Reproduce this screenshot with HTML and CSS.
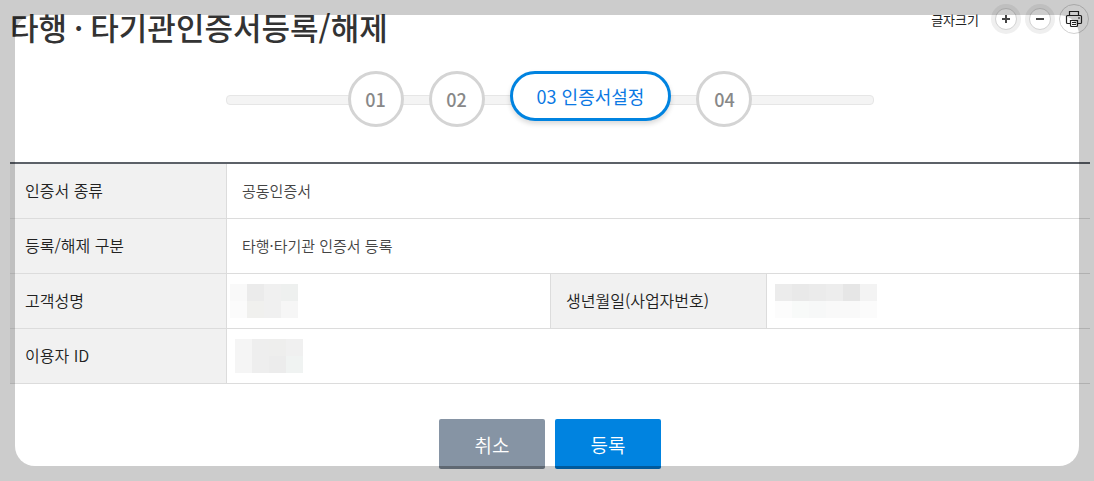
FILE: index.html
```html
<!DOCTYPE html>
<html lang="ko">
<head>
    <meta charset="UTF-8">
    <meta name="viewport" content="width=device-width, initial-scale=1.0">
    <title>타행·타기관인증서등록/해제</title>
    <link rel="stylesheet" href="styles.css">
</head>
<body>
    <header class="page-header">
        <h1>타행<span class="dot">·</span>타기관인증서등록/해제</h1>
        <div class="page-tools">
            <span class="tools-label">글자크기</span>
            <button type="button" class="tool-button" aria-label="글자 크게">
                <svg width="30" height="30" viewBox="0 0 30 30">
                    <circle cx="15" cy="15" r="15" fill="#efefef"/>
                    <circle cx="15" cy="15" r="10.5" fill="#fff" stroke="#d2d2d2"/>
                    <path d="M11 15h8M15 11v8" stroke="#444" stroke-width="2"/>
                </svg>
            </button>
            <button type="button" class="tool-button" aria-label="글자 작게">
                <svg width="30" height="30" viewBox="0 0 30 30">
                    <circle cx="15" cy="15" r="15" fill="#efefef"/>
                    <circle cx="15" cy="15" r="10.5" fill="#fff" stroke="#d2d2d2"/>
                    <path d="M11 15h8" stroke="#444" stroke-width="2"/>
                </svg>
            </button>
            <button type="button" class="tool-button" aria-label="인쇄">
                <svg width="30" height="30" viewBox="0 0 30 30">
                    <circle cx="15" cy="15" r="14.5" fill="#fff" stroke="#d2d2d2"/>
                    <g fill="none" stroke="#222" stroke-width="1.2">
                        <path d="M10.5 11.5v-4h9v4"/>
                        <path d="M11 19.5H8.5a1 1 0 0 1-1-1v-6a1 1 0 0 1 1-1h13a1 1 0 0 1 1 1v6a1 1 0 0 1-1 1H19"/>
                        <path d="M11.5 16.5h7v5a1 1 0 0 1-1 1h-5a1 1 0 0 1-1-1z"/>
                        <path d="M13 18.5h4M13 20.5h4" stroke-width="1"/>
                        <path d="M19 14h2" stroke-width="1"/>
                    </g>
                </svg>
            </button>
        </div>
    </header>

    <ol class="steps">
        <li class="step">01</li>
        <li class="step">02</li>
        <li class="step current" aria-current="step">03 인증서설정</li>
        <li class="step">04</li>
    </ol>

    <table class="info-table">
        <colgroup>
            <col class="col-label">
            <col class="col-value">
            <col class="col-label">
            <col class="col-value">
        </colgroup>
        <tr>
            <th scope="row">인증서 종류</th>
            <td colspan="3">공동인증서</td>
        </tr>
        <tr>
            <th scope="row">등록/해제 구분</th>
            <td colspan="3">타행·타기관 인증서 등록</td>
        </tr>
        <tr>
            <th scope="row">고객성명</th>
            <td class="masked name">
                <svg width="68" height="34" viewBox="0 0 4 2" shape-rendering="crispEdges">
                    <rect width="1" height="1" fill="#f9f9f9"/>
                    <rect x="1" width="1" height="1" fill="#ebebeb"/>
                    <rect x="2" width="1" height="1" fill="#f0f0f0"/>
                    <rect x="3" width="1" height="1" fill="#eef0ef"/>
                    <rect y="1" width="1" height="1" fill="#fbfbfb"/>
                    <rect x="1" y="1" width="1" height="1" fill="#f0f0ee"/>
                    <rect x="2" y="1" width="1" height="1" fill="#f0f0f0"/>
                    <rect x="3" y="1" width="1" height="1" fill="#f6f6f6"/>
                </svg>
            </td>
            <th scope="row">생년월일(사업자번호)</th>
            <td class="masked">
                <svg width="102" height="34" viewBox="0 0 6 2" shape-rendering="crispEdges">
                    <rect width="1" height="1" fill="#ececec"/>
                    <rect x="1" width="1" height="1" fill="#e9e9e9"/>
                    <rect x="2" width="1" height="1" fill="#ebebeb"/>
                    <rect x="3" width="1" height="1" fill="#ededed"/>
                    <rect x="4" width="1" height="1" fill="#e6e6e6"/>
                    <rect x="5" width="1" height="1" fill="#f3f3f3"/>
                    <rect y="1" width="1" height="1" fill="#fcfcfc"/>
                    <rect x="1" y="1" width="1" height="1" fill="#f8faf9"/>
                    <rect x="2" y="1" width="1" height="1" fill="#f7f8f8"/>
                    <rect x="3" y="1" width="2" height="1" fill="#f9f9f9"/>
                    <rect x="5" y="1" width="1" height="1" fill="#fbfbfb"/>
                </svg>
            </td>
        </tr>
        <tr>
            <th scope="row">이용자 ID</th>
            <td colspan="3" class="masked">
                <svg width="68" height="34" viewBox="0 0 4 2" shape-rendering="crispEdges">
                    <rect width="1" height="2" fill="#f5f5f5"/>
                    <rect x="1" width="1" height="2" fill="#eeeeee"/>
                    <rect x="2" width="1" height="1" fill="#eeeeed"/>
                    <rect x="3" width="1" height="1" fill="#f0f0f0"/>
                    <rect x="2" y="1" width="1" height="1" fill="#ececec"/>
                    <rect x="3" y="1" width="1" height="1" fill="#f0f3f2"/>
                </svg>
            </td>
        </tr>
    </table>

    <div class="actions">
        <button type="button" class="btn btn-cancel">취소</button>
        <button type="submit" class="btn btn-submit">등록</button>
    </div>

    <!-- 바깥 영역을 어둡게 처리 -->
    <div class="frame"></div>
</body>
</html>
```

FILE: styles.css
```css
* {
    box-sizing: border-box;
}

body {
    margin: 0;
    padding: 4px 4px 12px 10px;
    background-color: #fff;
    color: #333;
    font-family: "Noto Sans CJK KR", sans-serif;
    font-weight: 350;
}

.page-header {
    display: flex;
    justify-content: space-between;
    align-items: flex-start;
}

h1 {
    margin: 0;
    font-size: 31px;
    font-weight: 500;
    line-height: 46px;
}

h1 .dot {
    margin: 0 7px;
}

.page-tools {
    display: flex;
    align-items: center;
    gap: 4px;
    padding-right: 1px;
}

.tools-label {
    margin-right: 8px;
    color: #222;
    font-size: 13px;
    font-weight: 400;
}

.tool-button {
    padding: 0;
    border: none;
    background: none;
    cursor: pointer;
}

.tool-button svg {
    display: block;
}

/* 진행 단계 */
.steps {
    position: relative;
    display: flex;
    justify-content: center;
    align-items: flex-start;
    gap: 25px;
    width: 60%;
    margin: 21px auto 35px;
    padding: 0;
    list-style: none;
}

.steps::before {
    content: "";
    position: absolute;
    top: 24px;
    left: 0;
    right: 0;
    height: 8px;
    border: 1px solid #e6e6e6;
    border-radius: 4px;
    background-color: #f4f4f4;
}

.step {
    position: relative;
    width: 56px;
    height: 56px;
    border: 3px solid #d4d4d4;
    border-radius: 28px;
    background-color: #fff;
    color: #888;
    font-size: 18px;
    font-weight: 500;
    line-height: 50px;
    text-align: center;
}

.step.current {
    width: auto;
    height: 50px;
    padding: 0 24px;
    border-color: #0083e0;
    box-shadow: 0 3px 5px rgba(0, 0, 0, 0.15);
    color: #0b78e3;
    font-weight: 400;
    line-height: 44px;
}

/* 인증서 정보 */
.info-table {
    width: 100%;
    border-top: 2px solid #5c6168;
    border-spacing: 0;
    table-layout: fixed;
}

.col-label {
    width: 20%;
}

.col-value {
    width: 30%;
}

.info-table th,
.info-table td {
    height: 55px;
    padding: 0 15px 2px;
    border-bottom: 1px solid #dcdcdc;
    text-align: left;
}

.info-table th {
    background-color: #f1f1f1;
    color: #222;
    font-size: 16px;
    font-weight: 350;
}

.info-table td {
    border-left: 1px solid #dcdcdc;
    color: #444;
    font-size: 15px;
}

.info-table td + th {
    border-left: 1px solid #dcdcdc;
}

.info-table .masked {
    padding: 0 0 0 8px;
}

.info-table .masked.name {
    padding-left: 3px;
}

.masked svg {
    display: block;
}

.actions {
    display: flex;
    justify-content: center;
    gap: 10px;
    margin-top: 35px;
}

.btn {
    width: 106px;
    height: 50px;
    padding: 4px 0 0;
    border: none;
    border-bottom: 3px solid;
    border-radius: 2px;
    color: #fff;
    font-family: inherit;
    font-size: 19px;
    font-weight: 350;
    cursor: pointer;
}

.btn-cancel {
    border-color: #77828f;
    background-color: #8694a4;
}

.btn-submit {
    border-color: #0071c4;
    background-color: #0083e0;
}

.frame {
    position: fixed;
    inset: 15px;
    border-radius: 20px;
    box-shadow: 0 0 0 40px rgba(0, 0, 0, 0.2);
    pointer-events: none;
}
```
